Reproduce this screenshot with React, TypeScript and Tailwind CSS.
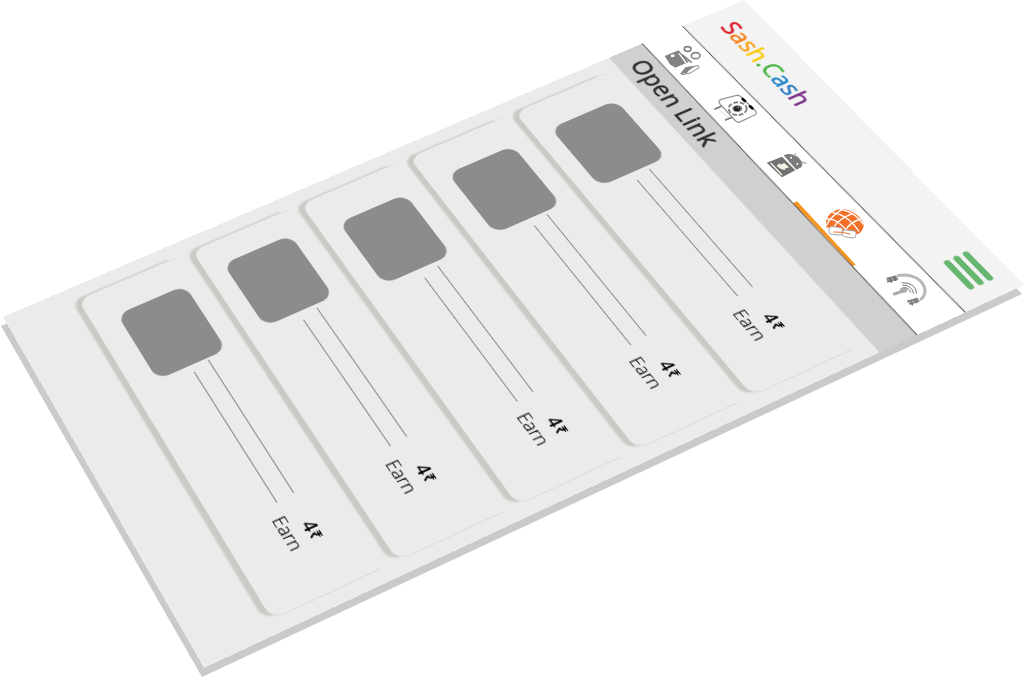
import React from 'react';

const plane =
  'absolute left-0 top-0 h-[800px] w-[400px] origin-top-left [transform:matrix3d(0.412318,0.632432,0,-0.00028094,-0.926495,0.37033,0,-0.00008177,0,0,1,0,744,0,0,1)]';

const logo = [
  ['S', 'text-[#d9202e]'],
  ['a', 'text-[#f58220]'],
  ['s', 'text-[#fba31a]'],
  ['h', 'text-[#fccb0a]'],
  ['.', 'text-[#4db748]'],
  ['C', 'text-[#4db748]'],
  ['a', 'text-[#2387c9]'],
  ['s', 'text-[#2f7cc2]'],
  ['h', 'text-[#7b2d8b]'],
];

const offers = [
  { square: 'left-[33px] top-[10px] h-[72px] w-[82px]', body: 'left-[119px] top-[31px]', text: 'top-0', gap: 'mb-[15px]' },
  { square: 'left-[34px] top-[9px] h-[70px] w-[82px]', body: 'left-[119px] top-[26px]', text: '-top-[4px]', gap: 'mb-[16px]' },
  { square: 'left-[36px] top-[10px] h-[70px] w-[82px]', body: 'left-[123px] top-[27px]', text: '-top-[6px]', gap: 'mb-[14px]' },
  { square: 'left-[27px] top-[12px] h-[70px] w-[81px]', body: 'left-[112px] top-[31px]', text: '-top-[2px]', gap: 'mb-[17px]' },
  { square: 'left-[32px] top-[7px] h-[69px] w-[82px]', body: 'left-[116px] top-[26px]', text: '-top-[3px]', gap: '' },
];

function Header() {
  return (
    <header className="flex h-[71px] items-start justify-between bg-[#f3f3f3] pl-[18px] pr-[17px]">
      <h1 className="mt-[12px] text-[25.5px] leading-[38px] tracking-[0px] [-webkit-text-stroke:0.6px_currentColor]">
        {logo.map(([letter, color], i) => (
          <span key={i} className={color}>
            {letter}
          </span>
        ))}
      </h1>
      <button aria-label="Menu" className="mt-[17px] flex w-[36px] flex-col gap-[4px]">
        <span className="h-[6px] rounded-full bg-[#67b66f]" />
        <span className="h-[6px] rounded-full bg-[#67b66f]" />
        <span className="h-[6px] rounded-full bg-[#67b66f]" />
      </button>
    </header>
  );
}

function TabStrip() {
  return (
    <div className="relative z-10 -mt-[10px] h-[56px] bg-[#555] [clip-path:polygon(0_9px,100%_0,100%_51px,0_56px)]">
      <div className="flex h-full items-end bg-white pl-[231px] [clip-path:polygon(0_10px,100%_1px,100%_50px,0_55px)]">
        <div className="mb-[3px] h-[5px] w-[83px] bg-[#f7941d]" />
      </div>
    </div>
  );
}

function Offer({ square, body, text, gap }: { square: string; body: string; text: string; gap: string }) {
  return (
    <li
      className={`relative ml-[15px] h-[100px] w-[372px] shrink-0 rounded-b-[12px] border-x border-b border-[#dcdcda] border-b-transparent bg-[#ebebeb] shadow-[-2px_7px_2px_-1px_#c9cac4] ${gap}`}
    >
      <div className={`absolute rounded-[12px] bg-[#8c8c8c] ${square}`} />
      <div className={`absolute w-[157px] border-t border-[#8c8c8c] ${body}`}>
        <div className="-mr-[2px] ml-[6px] mt-[16px] border-t border-[#8c8c8c]" />
        <div className={`absolute left-[172px] w-[60px] ${text}`}>
          <p className="absolute -top-[4px] left-[15px] flex gap-[1px] whitespace-nowrap text-[17px] font-semibold leading-[20px] text-black">
            4<span className="text-[14px]">₹</span>
          </p>
          <p className="absolute left-0 top-[14px] text-[17px] font-light leading-[24px] text-black [-webkit-text-stroke:0.2px_#000]">
            Earn
          </p>
        </div>
      </div>
    </li>
  );
}

function Icons() {
  return (
    <svg className="absolute left-0 top-0" width="1024" height="678" viewBox="0 0 1024 678" fill="none">
      <g transform="translate(640 30) scale(.33333)">
        <path d="M74 78L116 61L146 96L106 113L90 103Z" fill="#828282" />
        <path d="M117 70L138 99" stroke="#fff" strokeWidth="4" />
        <path d="M126 74L155 98" stroke="#828282" strokeWidth="5" />
        <ellipse cx="98" cy="77" rx="6" ry="4.5" fill="#fff" />
        <ellipse cx="143" cy="57" rx="10" ry="7" stroke="#858585" strokeWidth="5" />
        <ellipse cx="167" cy="77" rx="13" ry="9" stroke="#858585" strokeWidth="5" />
        <path d="M122 131L137 113L176 107L177 113L151 129L126 134Z" fill="#fff" stroke="#888" strokeWidth="3" />
        <path d="M122 131L137 112L168 109Q150 116 140 130Z" fill="#858585" />

        <path d="M240 222Q232 214 243 208L290 196Q297 195 303 200L346 242Q353 250 344 255L302 275Q293 279 287 273Z" fill="#fff" stroke="#999" strokeWidth="4" />
        <path d="M231 233L268 266" stroke="#ccc" strokeWidth="2" />
        <path d="M244 229L223 238M276 262L255 271" stroke="#777" strokeWidth="5" />
        <ellipse cx="293" cy="236" rx="27" ry="19" stroke="#888" strokeWidth="6" strokeDasharray="14 5" />
        <ellipse cx="292" cy="236" rx="15" ry="10" fill="#777" />
        <ellipse cx="291" cy="236" rx="9" ry="7" fill="#222" />
        <circle cx="294" cy="233" r="2" fill="#ddd" />
        <path d="M308 207L315 213M330 229L337 235" stroke="#000" strokeWidth="8" strokeLinecap="round" />
      </g>

      <g transform="translate(750 130) scale(.33333)">
        <path d="M50 98L96 80L136 121L96 142Z" fill="#727272" />
        <path d="M101 76Q121 66 143 80Q164 100 154 112L139 119Z" fill="#7b7b7b" />
        <path d="M131 79L139 70M153 96L170 100" stroke="#aaa" strokeWidth="4" />
        <circle cx="123" cy="83" r="3" fill="#fff" />
        <circle cx="142" cy="102" r="3" fill="#fff" />
        <path d="M62 99L96 135" stroke="#f4f4ee" strokeWidth="4" />
        <path d="M80 107L89 100L91 104L103 99L117 112L104 116L106 121L91 116Z" fill="#f5f4e6" />

        <path d="M229 286C224 261 249 238 276 238C306 238 340 263 341 288Q339 303 324 313L229 292Z" fill="#f37029" />
        <path d="M231 267Q260 264 292 304M247 248Q295 255 327 305M270 238Q315 245 340 283" stroke="#fff" strokeWidth="4" />
        <path d="M229 287Q237 264 276 238M251 292Q266 266 309 250M287 300Q301 276 333 267" stroke="#fff" strokeWidth="4" />
        <rect x="237" y="291" width="40" height="23" rx="7" transform="rotate(7 257 302)" fill="#fff" stroke="#999" strokeWidth="2.5" />
        <rect x="278" y="301" width="40" height="21" rx="7" transform="rotate(7 298 311)" fill="#fff" stroke="#999" strokeWidth="2.5" />
        <path d="M250 306L280 307L302 313" stroke="#f37029" strokeWidth="3" />
      </g>

      <g transform="translate(860 230) scale(.33333)">
        <path d="M112 137C155 128 190 148 195 180Q196 199 180 209" stroke="#b7b7b7" strokeWidth="9" />
        <path d="M80 147L110 139M81 155L114 146" stroke="#888" strokeWidth="7" />
        <path d="M88 143L95 158M102 139L108 153" stroke="#666" strokeWidth="4" />
        <path d="M142 215L174 206M148 222L178 212" stroke="#888" strokeWidth="7" />
        <path d="M151 212L158 226M164 207L170 220" stroke="#777" strokeWidth="4" />
        <path d="M125 158Q168 158 170 191M127 165Q157 166 161 191M129 172Q149 173 152 188" stroke="#777" strokeWidth="3" />
        <ellipse cx="131" cy="180" rx="11" ry="8" fill="#aaa" />
        <path d="M103 192L126 184" stroke="#aaa" strokeWidth="9" strokeLinecap="round" />
      </g>
    </svg>
  );
}

export default function App() {
  return (
    <main className="relative h-[678px] w-[1024px] overflow-hidden bg-white font-['Open_Sans','Noto_Sans',sans-serif]">
      <div className="absolute -left-[2px] top-[9px]">
        <div className={`${plane} bg-[#cacaca]`} />
      </div>
      <div className={`${plane} flex flex-col overflow-hidden bg-[#ebebeb]`}>
        <Header />
        <TabStrip />
        <h2 className="-mt-[6px] h-[43px] bg-[#d0d0d0] pl-[17px] pt-[4px] text-[25px] font-medium leading-[36px] tracking-[0.3px] text-[#2f2a2d] [-webkit-text-stroke:0.6px_#2f2a2d] [clip-path:polygon(0_0,100%_0,100%_39px,0_43px)]">
          Open Link
        </h2>
        <ul className="mt-[15px] flex flex-col">
          {offers.map((offer, i) => (
            <Offer key={i} {...offer} />
          ))}
        </ul>
      </div>
      <Icons />
    </main>
  );
}
